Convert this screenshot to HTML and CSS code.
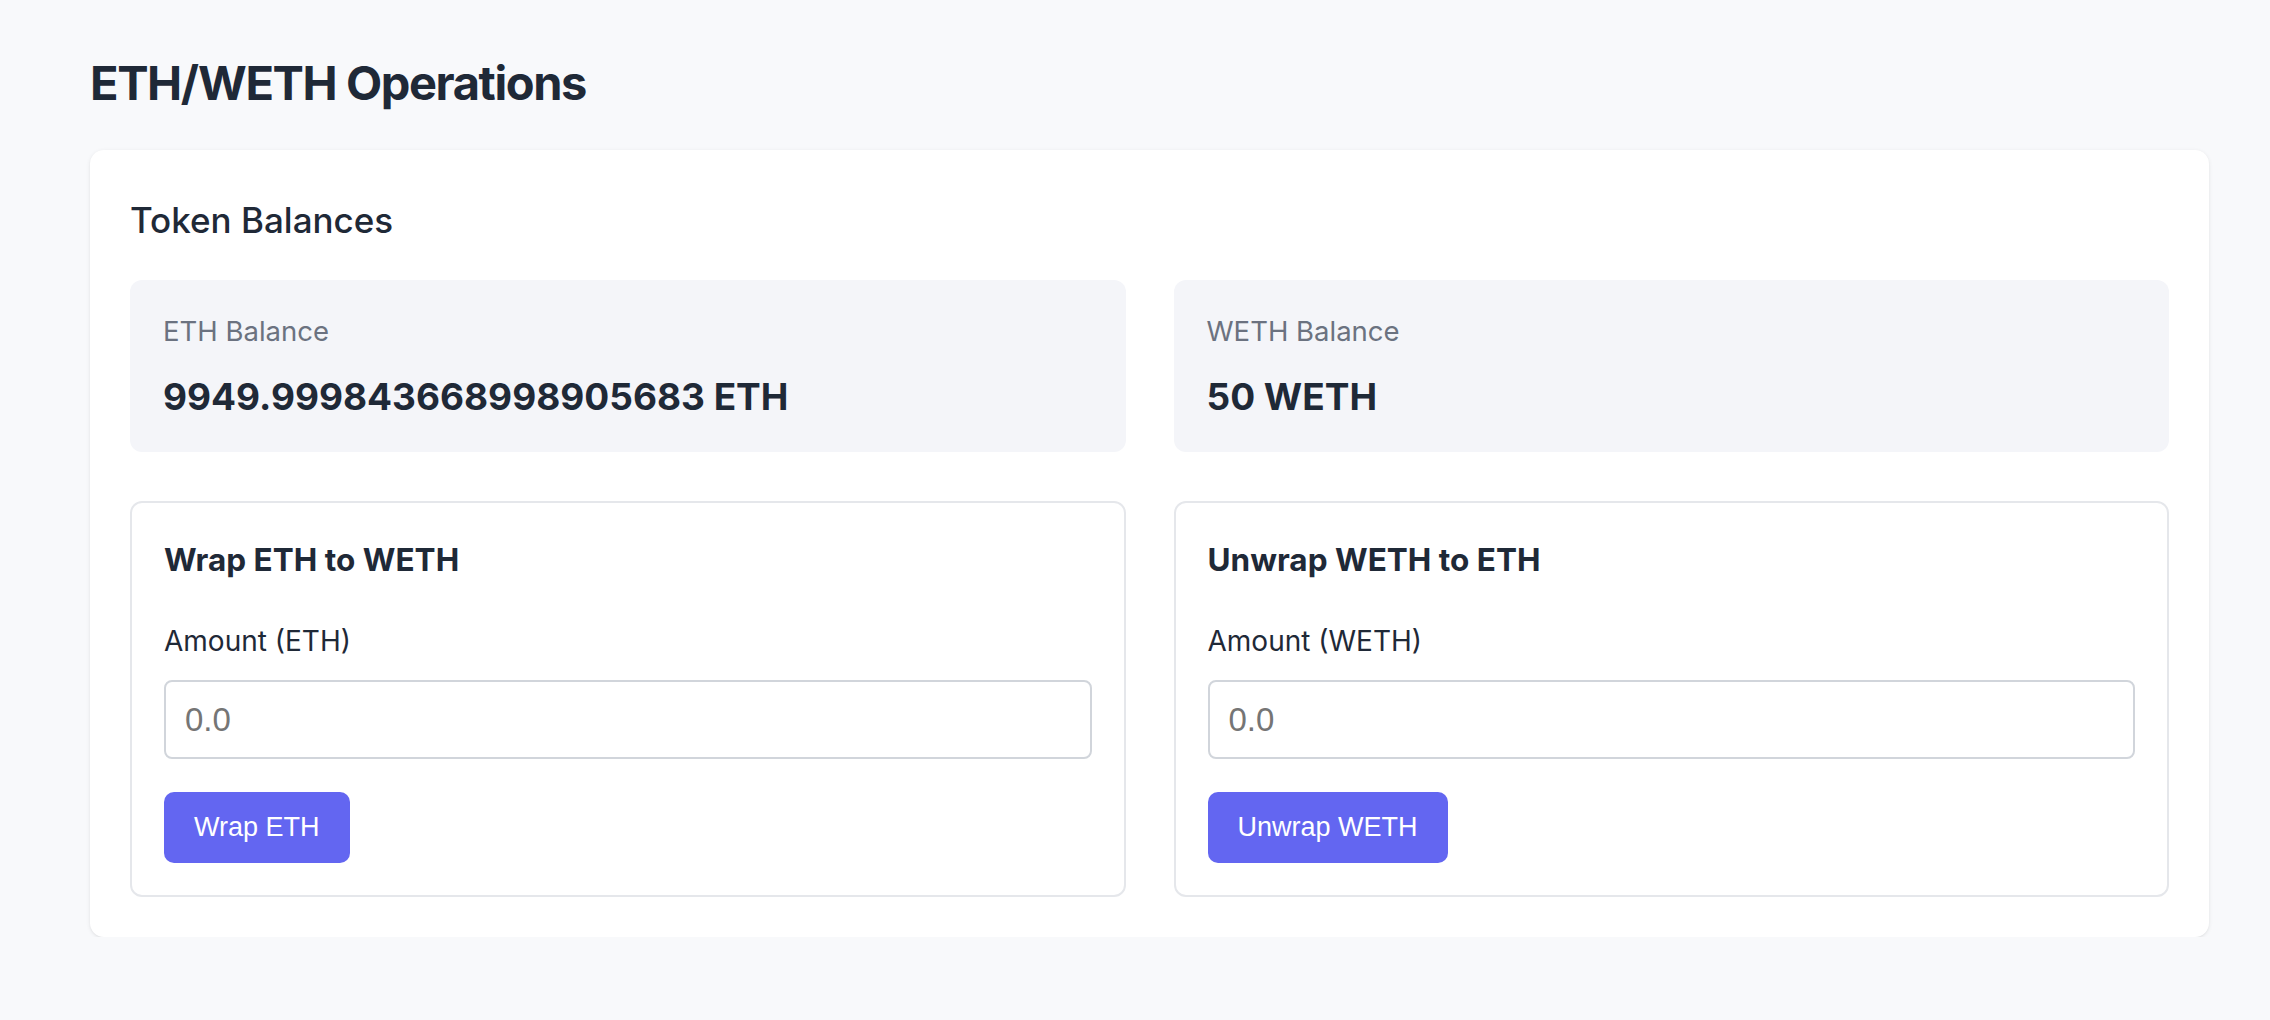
FILE: index.html
```html
<!DOCTYPE html>
<html lang="en">
<head>
<meta charset="utf-8">
<title>ETH/WETH Operations</title>
<link rel="stylesheet" href="styles.css">
</head>
<body>
<main class="page">
  <h1 class="page-title">ETH/WETH Operations</h1>
  <section class="card">
    <h2 class="card-title">Token Balances</h2>
    <div class="grid">
      <div class="balance">
        <div class="balance-label">ETH Balance</div>
        <div class="balance-value">9949.999843668998905683 ETH</div>
      </div>
      <div class="balance">
        <div class="balance-label">WETH Balance</div>
        <div class="balance-value">50 WETH</div>
      </div>
    </div>
    <div class="grid panels">
      <div class="panel">
        <h3 class="panel-title">Wrap ETH to WETH</h3>
        <label class="field-label" for="wrap">Amount (ETH)</label>
        <input class="field" id="wrap" type="text" placeholder="0.0">
        <button class="btn" type="button">Wrap ETH</button>
      </div>
      <div class="panel">
        <h3 class="panel-title">Unwrap WETH to ETH</h3>
        <label class="field-label" for="unwrap">Amount (WETH)</label>
        <input class="field" id="unwrap" type="text" placeholder="0.0">
        <button class="btn" type="button">Unwrap WETH</button>
      </div>
    </div>
  </section>
</main>
</body>
</html>
```
FILE: styles.css
```css
* { box-sizing: border-box; }
html, body {
  margin: 0;
  background: #f8f9fb;
}
body {
  font-family: Inter, "Noto Sans", sans-serif;
  color: #1f2937;
}
.page {
  padding: 53px 61px 0 90px;
}
.page-title {
  margin: 0 0 37px;
  font-size: 47px;
  line-height: 60px;
  font-weight: 700;
  color: #1f2937;
  letter-spacing: -1.4px;
}
.card {
  background: #ffffff;
  border-radius: 14px;
  box-shadow: 0 1px 4px rgba(0, 0, 0, 0.08), 0 1px 2px rgba(0, 0, 0, 0.04);
  padding: 40px;
}
.card-title {
  margin: 0 0 30px;
  font-size: 35px;
  line-height: 60px;
  font-weight: 500;
  color: #1f2937;
}
.grid {
  display: grid;
  grid-template-columns: 1fr 1fr;
  gap: 48px;
}
.panels {
  margin-top: 49px;
}
.balance {
  background: #f4f5f9;
  border-radius: 12px;
  padding: 33px;
  height: 172px;
}
.balance-label {
  font-size: 27.5px;
  line-height: 36px;
  color: #6b7280;
}
.balance-value {
  margin-top: 25px;
  font-size: 37px;
  line-height: 45px;
  font-weight: 700;
  color: #1f2937;
}
.panel {
  border: 2px solid #e5e7eb;
  border-radius: 12px;
  padding: 35px 32px 32px;
  display: flex;
  flex-direction: column;
  align-items: flex-start;
}
.panel-title {
  margin: 0;
  font-size: 31.5px;
  line-height: 44px;
  font-weight: 700;
  color: #1f2937;
}
.field-label {
  margin-top: 41px;
  font-size: 28px;
  line-height: 36px;
  color: #1f2937;
}
.field {
  margin-top: 21px;
  width: 100%;
  height: 79px;
  border: 2px solid #d1d5db;
  border-radius: 8px;
  padding: 0 19px;
  font-family: "Liberation Sans", Arial, sans-serif;
  font-size: 33px;
  color: #1f2937;
  background: #ffffff;
  outline: none;
}
.field::placeholder {
  color: #757575;
}
.btn {
  margin-top: 33px;
  height: 71px;
  padding: 0 30px;
  border: none;
  border-radius: 10px;
  background: #6366f1;
  color: #ffffff;
  font-family: "Liberation Sans", Arial, sans-serif;
  font-size: 27px;
  cursor: pointer;
}
```
